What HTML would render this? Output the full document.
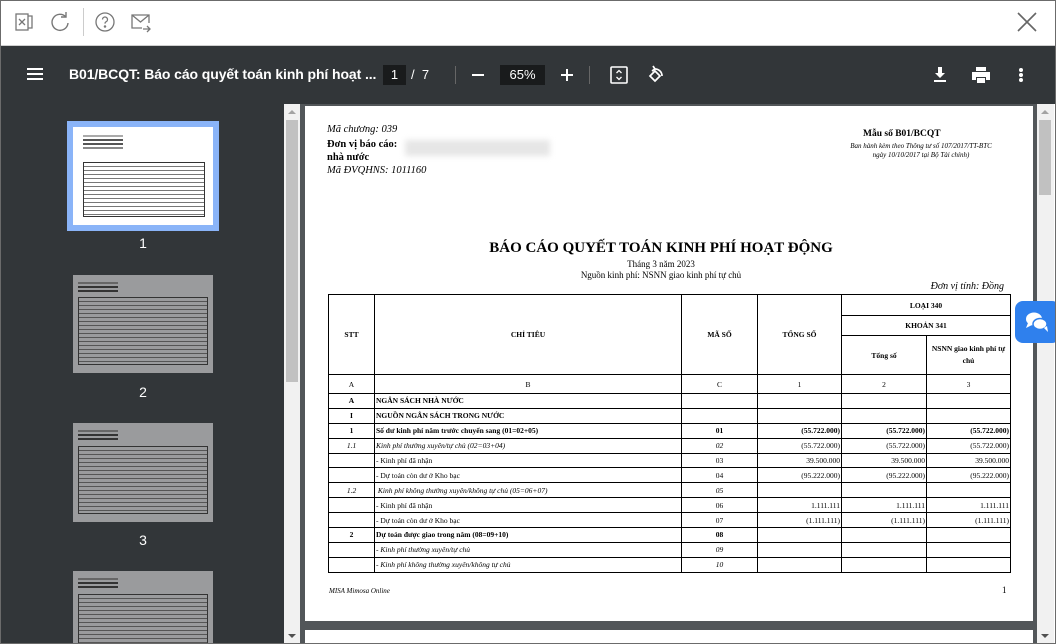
<!DOCTYPE html>
<html><head><meta charset="utf-8">
<style>
*{box-sizing:border-box;margin:0;padding:0}
body{width:1056px;height:644px;overflow:hidden;background:#fff;font-family:"Liberation Sans",sans-serif;position:relative}
.frame{position:absolute;inset:0;border:1px solid #6b6b6b;pointer-events:none;z-index:10}
.top{position:absolute;left:0;top:0;width:1056px;height:46px;background:#fff;border-bottom:1px solid #cfcfcf}
.tb{position:absolute;left:0;top:46px;width:1056px;height:58px;background:#323639;color:#fff}
.side{position:absolute;left:0;top:104px;width:284px;height:540px;background:#323639;overflow:hidden}
.sbar{position:absolute;top:104px;width:16px;height:540px;background:#f1f1f1}
.sthumb{position:absolute;left:2px;width:12px;background:#c1c1c1}
.main{position:absolute;left:300px;top:104px;width:737px;height:540px;background:#525659;overflow:hidden}
.page{position:absolute;left:5px;background:#fff;width:728px}
.doc{font-family:"Liberation Serif",serif;color:#000;position:absolute}
table{border-collapse:collapse;position:absolute;left:23px;top:188px;font-family:"Liberation Serif",serif;font-size:7.5px;table-layout:fixed}
td{border:1px solid #000;height:14.9px;padding:0 1px;overflow:hidden;white-space:nowrap}
.c{text-align:center}.r{text-align:right}.b{font-weight:bold}.i{font-style:italic}
.th{position:absolute;background:#fff;overflow:hidden}
.th.g{background:#9a9b9d}
.lbl{position:absolute;color:#fff;font-size:14px;width:40px;text-align:center}
</style></head><body>
<div class="top">
 <svg style="position:absolute;left:14px;top:12px" width="20" height="20" viewBox="0 0 20 20" fill="none" stroke="#777" stroke-width="1.3"><rect x="2" y="2" width="12" height="16"/><path d="M14 4h4v12h-4"/><path d="M5 7l6 6M11 7l-6 6"/></svg>
 <svg style="position:absolute;left:50px;top:11px" width="20" height="22" viewBox="0 0 20 22" fill="none" stroke="#777" stroke-width="1.4"><path d="M16 6A8 8 0 1 0 18 12"/><path d="M16 1v5h-5"/></svg>
 <div style="position:absolute;left:83px;top:8px;width:1px;height:28px;background:#ccc"></div>
 <svg style="position:absolute;left:94px;top:11px" width="22" height="22" viewBox="0 0 22 22" fill="none" stroke="#777" stroke-width="1.3"><circle cx="11" cy="11" r="9"/><path d="M8.5 8.5a2.5 2.5 0 1 1 3.5 2.3c-.8.4-1 1-1 1.8"/><circle cx="11" cy="15.5" r=".6" fill="#777"/></svg>
 <svg style="position:absolute;left:130px;top:12px" width="22" height="22" viewBox="0 0 22 22" fill="none" stroke="#777" stroke-width="1.3"><path d="M12 16H2V3h17v8"/><path d="M2 3l8.5 7L19 3"/><path d="M13 17h7M17 14l3 3-3 3"/></svg>
 <svg style="position:absolute;left:1016px;top:11px" width="22" height="22" viewBox="0 0 22 22" stroke="#666" stroke-width="1.6"><path d="M2 2l18 18M20 2L2 20"/></svg>
</div>
<div class="tb">
 <div style="position:absolute;left:27px;top:22px;width:16px;height:2px;background:#fff;box-shadow:0 5px #fff,0 10px #fff"></div>
 <div style="position:absolute;left:69px;top:20px;font-size:14px;font-weight:bold;letter-spacing:-0.1px;font-family:'Liberation Sans Narrow','Liberation Sans',sans-serif">B01/BCQT: Báo cáo quyết toán kinh phí hoạt ...</div>
 <div style="position:absolute;left:383px;top:19px;width:23px;height:20px;background:#191b1c;font-size:13px;text-align:center;line-height:20px">1</div>
 <div style="position:absolute;left:411px;top:19px;font-size:13px;line-height:20px">/&nbsp; 7</div>
 <div style="position:absolute;left:455px;top:20px;width:1px;height:18px;background:#666"></div>
 <div style="position:absolute;left:472px;top:28px;width:12px;height:2px;background:#fff"></div>
 <div style="position:absolute;left:500px;top:19px;width:45px;height:20px;background:#191b1c;font-size:13px;text-align:center;line-height:20px">65%</div>
 <div style="position:absolute;left:561px;top:28px;width:12px;height:2px;background:#fff"></div>
 <div style="position:absolute;left:566px;top:23px;width:2px;height:12px;background:#fff"></div>
 <div style="position:absolute;left:589px;top:20px;width:1px;height:18px;background:#666"></div>
 <svg style="position:absolute;left:610px;top:20px" width="18" height="18" viewBox="0 0 18 18" fill="none" stroke="#fff" stroke-width="1.6"><rect x="1" y="1" width="16" height="16" rx="1"/><path d="M6.5 7L9 4.5 11.5 7M6.5 11L9 13.5 11.5 11" stroke-width="1.3"/></svg>
 <svg style="position:absolute;left:645px;top:18px" width="20" height="22" viewBox="0 0 20 22" fill="none" stroke="#fff" stroke-width="1.7"><path d="M10 7l-5 5 5 5 5-5z"/><path d="M9 5a7 7 0 0 1 8 7"/><path d="M8 2l2 3-3 2"/></svg>
 <svg style="position:absolute;left:932px;top:20px" width="16" height="18" viewBox="0 0 16 18" fill="#fff"><path d="M6 1h4v6h3l-5 5-5-5h3z"/><rect x="2" y="14" width="12" height="2"/></svg>
 <svg style="position:absolute;left:971px;top:20px" width="20" height="18" viewBox="0 0 20 18" fill="#fff"><rect x="5" y="1" width="10" height="4"/><path d="M1 6h18v8h-4v-3H5v3H1z"/><rect x="6" y="12" width="8" height="5"/></svg>
 <div style="position:absolute;left:1019px;top:22px;width:4px;height:4px;border-radius:2px;background:#fff;box-shadow:0 5px #fff,0 10px #fff"></div>
</div>
<div class="side">
 <div style="position:absolute;left:67px;top:17px;width:152px;height:110px;background:#8ab4f8"></div>
 <div class="th" style="left:73px;top:23px;width:140px;height:98px">
  <div style="position:absolute;left:10px;top:35px;width:122px;height:55px;border:1px solid #333;background:repeating-linear-gradient(#fff 0 3px,#777 3px 4px)"></div>
  <div style="position:absolute;left:10px;top:8px;width:40px;height:2px;background:#aaa;box-shadow:0 4px #555,0 8px #555,0 12px #888"></div>
 </div>
 <div class="lbl" style="left:123px;top:131px">1</div>
 <div class="th g" style="left:73px;top:171px;width:140px;height:98px">
  <div style="position:absolute;left:5px;top:22px;width:130px;height:68px;border:1px solid #333;background:repeating-linear-gradient(#9a9b9d 0 3px,#555 3px 4px)"></div>
  <div style="position:absolute;left:5px;top:7px;width:40px;height:2px;background:#666;box-shadow:0 4px #333,0 8px #333"></div>
 </div>
 <div class="lbl" style="left:123px;top:280px">2</div>
 <div class="th g" style="left:73px;top:319px;width:140px;height:99px">
  <div style="position:absolute;left:5px;top:23px;width:130px;height:68px;border:1px solid #333;background:repeating-linear-gradient(#9a9b9d 0 3px,#555 3px 4px)"></div>
  <div style="position:absolute;left:5px;top:7px;width:40px;height:2px;background:#666;box-shadow:0 4px #333,0 8px #333"></div>
 </div>
 <div class="lbl" style="left:123px;top:428px">3</div>
 <div class="th g" style="left:73px;top:467px;width:140px;height:99px">
  <div style="position:absolute;left:5px;top:23px;width:130px;height:68px;border:1px solid #333;background:repeating-linear-gradient(#9a9b9d 0 3px,#555 3px 4px)"></div>
  <div style="position:absolute;left:5px;top:7px;width:40px;height:2px;background:#666;box-shadow:0 4px #333,0 8px #333"></div>
 </div>
</div>
<div class="sbar" style="left:284px"><div class="sthumb" style="top:16px;height:262px"></div>
 <div style="position:absolute;left:4px;top:6px;border:4px solid transparent;border-bottom:4px solid #a3a3a3;border-top:0"></div>
 <div style="position:absolute;left:4px;top:530px;border:4px solid transparent;border-top:4px solid #505050;border-bottom:0"></div></div>
<div class="main">
 <div class="page" style="top:2px;height:515px">
  <div class="doc i" style="left:22px;top:18px;font-size:10.5px">Mã chương: 039</div>
  <div class="doc b" style="left:22px;top:33px;font-size:10.5px">Đơn vị báo cáo:</div>
  <div style="position:absolute;left:100px;top:34px;width:145px;height:16px;background:#e6e6e6;filter:blur(3px)"></div>
  <div class="doc b" style="left:22px;top:46px;font-size:10.5px">nhà nước</div>
  <div class="doc i" style="left:22px;top:59px;font-size:10.5px">Mã ĐVQHNS: 1011160</div>
  <div class="doc b" style="left:558px;top:23px;font-size:9.5px">Mẫu số B01/BCQT</div>
  <div class="doc i" style="left:516px;top:36px;font-size:7px;width:200px;text-align:center;line-height:9px">Ban hành kèm theo Thông tư số 107/2017/TT-BTC<br>ngày 10/10/2017 tại Bộ Tài chính)</div>
  <div class="doc b" style="left:-8px;width:728px;text-align:center;top:134px;font-size:15px">BÁO CÁO QUYẾT TOÁN KINH PHÍ HOẠT ĐỘNG</div>
  <div class="doc" style="left:-8px;width:728px;text-align:center;top:153px;font-size:9px">Tháng 3 năm 2023</div>
  <div class="doc" style="left:-8px;width:728px;text-align:center;top:164px;font-size:9px">Nguồn kinh phí: NSNN giao kinh phí tự chủ</div>
  <div class="doc i" style="left:595px;top:175px;width:104px;text-align:right;font-size:10px">Đơn vị tính: Đồng</div>
  <table>
   <colgroup><col style="width:46px"><col style="width:307px"><col style="width:76px"><col style="width:84px"><col style="width:85px"><col style="width:84px"></colgroup>
   <tr><td rowspan="3" class="c b">STT</td><td rowspan="3" class="c b">CHỈ TIÊU</td><td rowspan="3" class="c b">MÃ SỐ</td><td rowspan="3" class="c b">TỔNG SỐ</td><td colspan="2" class="c b" style="height:21px">LOẠI 340</td></tr>
   <tr><td colspan="2" class="c b" style="height:20px">KHOẢN 341</td></tr>
   <tr><td class="c b" style="height:39px">Tổng số</td><td class="c b" style="white-space:normal;line-height:12px">NSNN giao kinh phí tự chủ</td></tr>
   <tr><td class="c" style="height:19px">A</td><td class="c">B</td><td class="c">C</td><td class="c">1</td><td class="c">2</td><td class="c">3</td></tr>
   <tr class="b"><td class="c">A</td><td>NGÂN SÁCH NHÀ NƯỚC</td><td></td><td></td><td></td><td></td></tr>
   <tr class="b"><td class="c">I</td><td>NGUỒN NGÂN SÁCH TRONG NƯỚC</td><td></td><td></td><td></td><td></td></tr>
   <tr class="b"><td class="c">1</td><td>Số dư kinh phí năm trước chuyển sang (01=02+05)</td><td class="c">01</td><td class="r">(55.722.000)</td><td class="r">(55.722.000)</td><td class="r">(55.722.000)</td></tr>
   <tr><td class="c i">1.1</td><td class="i">Kinh phí thường xuyên/tự chủ (02=03+04)</td><td class="c i">02</td><td class="r">(55.722.000)</td><td class="r">(55.722.000)</td><td class="r">(55.722.000)</td></tr>
   <tr><td></td><td>- Kinh phí đã nhận</td><td class="c">03</td><td class="r">39.500.000</td><td class="r">39.500.000</td><td class="r">39.500.000</td></tr>
   <tr><td></td><td>- Dự toán còn dư ở Kho bạc</td><td class="c">04</td><td class="r">(95.222.000)</td><td class="r">(95.222.000)</td><td class="r">(95.222.000)</td></tr>
   <tr><td class="c i">1.2</td><td class="i">&nbsp;Kinh phí không thường xuyên/không tự chủ (05=06+07)</td><td class="c i">05</td><td></td><td></td><td></td></tr>
   <tr><td></td><td>- Kinh phí đã nhận</td><td class="c">06</td><td class="r">1.111.111</td><td class="r">1.111.111</td><td class="r">1.111.111</td></tr>
   <tr><td></td><td>- Dự toán còn dư ở Kho bạc</td><td class="c">07</td><td class="r">(1.111.111)</td><td class="r">(1.111.111)</td><td class="r">(1.111.111)</td></tr>
   <tr class="b"><td class="c">2</td><td>Dự toán được giao trong năm (08=09+10)</td><td class="c">08</td><td></td><td></td><td></td></tr>
   <tr class="i"><td></td><td>- Kinh phí thường xuyên/tự chủ</td><td class="c">09</td><td></td><td></td><td></td></tr>
   <tr class="i"><td></td><td>- Kinh phí không thường xuyên/không tự chủ</td><td class="c">10</td><td></td><td></td><td></td></tr>
  </table>
  <div class="doc i" style="left:24px;top:481px;font-size:7px">MISA Mimosa Online</div>
  <div class="doc" style="left:697px;top:479px;font-size:9px">1</div>
 </div>
 <div class="page" style="top:526px;height:20px"></div>
</div>
<div class="sbar" style="left:1037px;width:17px"><div class="sthumb" style="top:16px;height:75px"></div>
 <div style="position:absolute;left:4px;top:6px;border:4px solid transparent;border-bottom:4px solid #a3a3a3;border-top:0"></div>
 <div style="position:absolute;left:4px;top:530px;border:4px solid transparent;border-top:4px solid #505050;border-bottom:0"></div></div>
<div style="position:absolute;left:1015px;top:301px;width:45px;height:42px;background:#2f80ed;border-radius:8px"></div>
<svg style="position:absolute;left:1024px;top:309px" width="26" height="26" viewBox="0 0 26 26"><ellipse cx="10" cy="10" rx="8" ry="6.5" fill="#fff"/><path d="M4 14l-2 5 6-3z" fill="#fff"/><ellipse cx="16" cy="15" rx="7" ry="5.5" fill="#fff" stroke="#2f80ed" stroke-width="1.5"/><path d="M20 19l4 4-1-6z" fill="#fff"/></svg>
<div class="frame"></div>
</body></html>
